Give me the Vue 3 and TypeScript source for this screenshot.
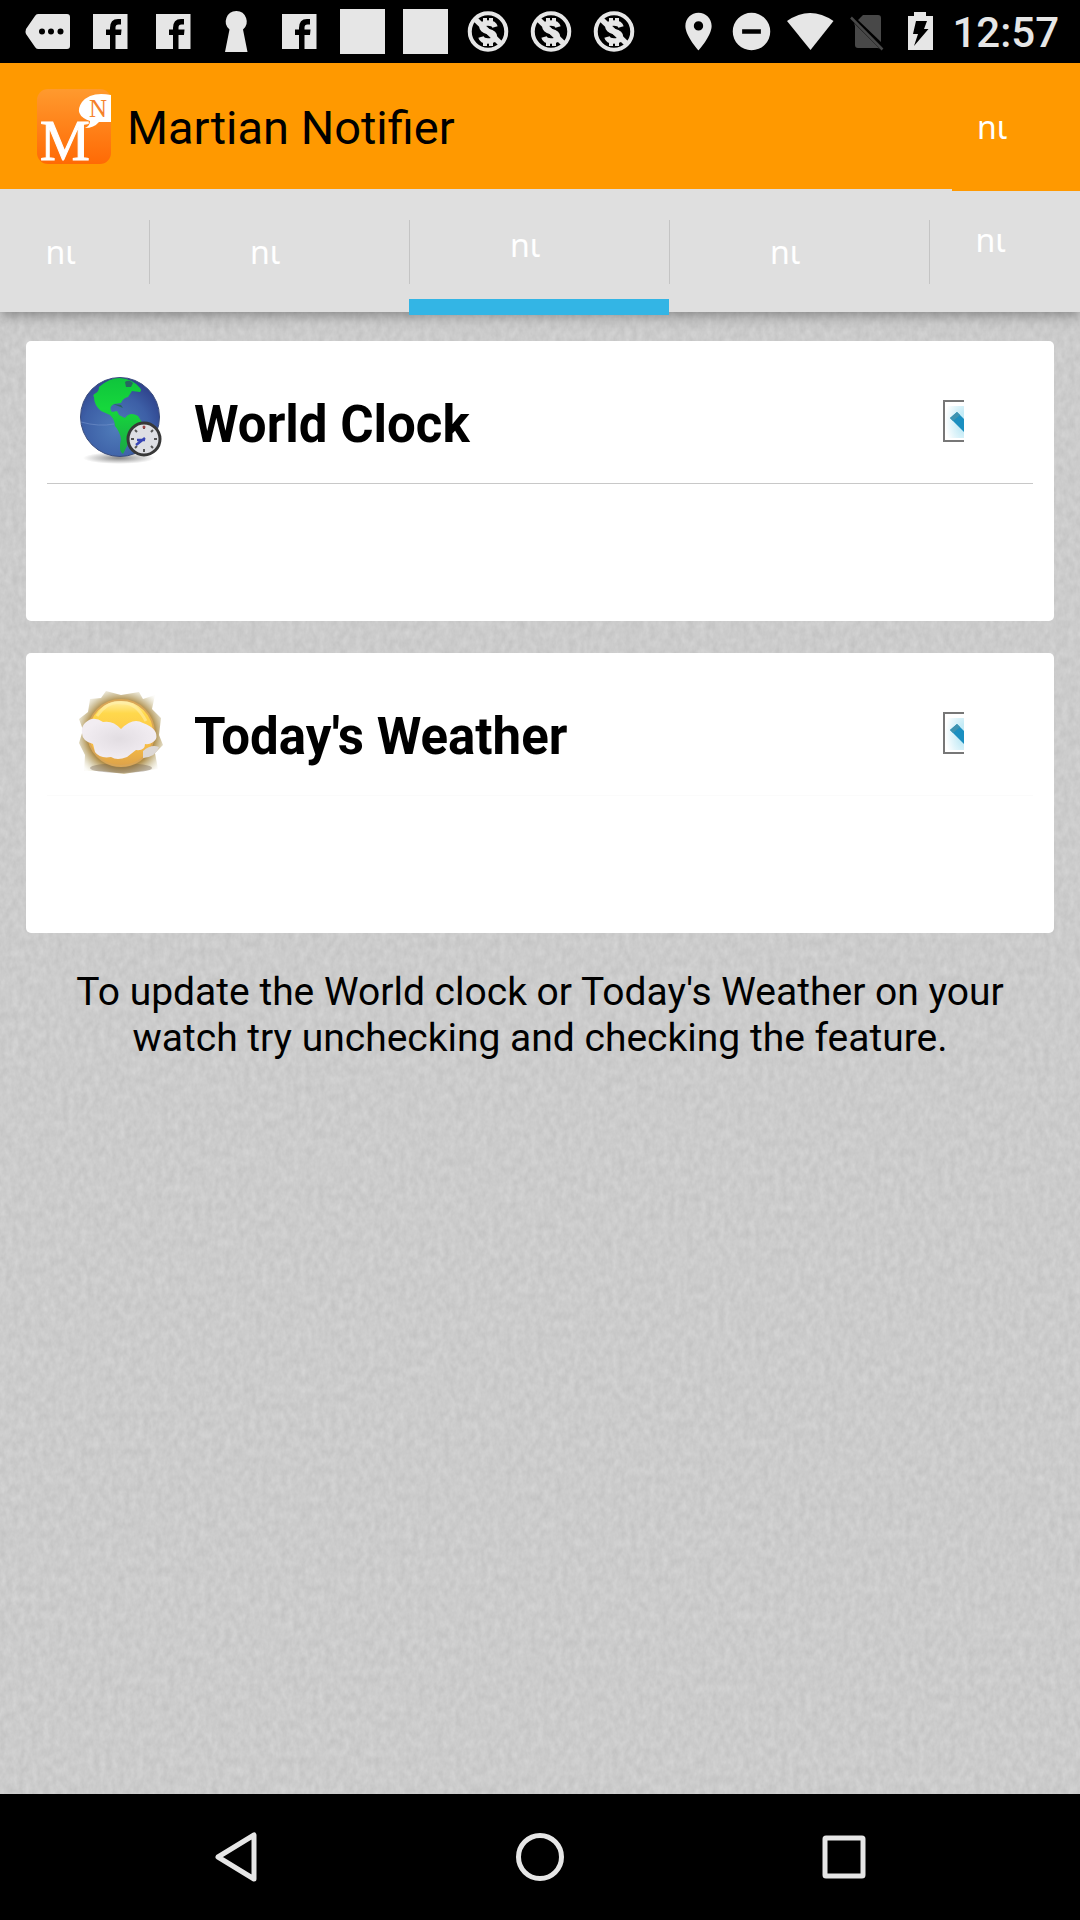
<script setup lang="ts">
import { ref } from 'vue'

type NoteIcon = 'more' | 'facebook' | 'keyhole' | 'blank' | 'nocash'

interface Tab {
  id: string
  size: string
}

const notes: NoteIcon[] = [
  'more', 'facebook', 'facebook', 'keyhole', 'facebook',
  'blank', 'blank', 'nocash', 'nocash', 'nocash',
]

const tabs: Tab[] = [
  { id: 'first', size: 'leading' },
  { id: 'second', size: 'full' },
  { id: 'third', size: 'full' },
  { id: 'fourth', size: 'full' },
  { id: 'last', size: 'trailing' },
]

const activeTab = ref('third')

const features = ref([
  { id: 'clock', title: 'World Clock', enabled: true },
  { id: 'weather', title: "Today's Weather", enabled: true },
])
</script>

<template>
  <div class="screen">
    <div class="status">
      <div class="notes">
        <svg v-for="(icon, i) in notes" :key="i" class="slot" viewBox="0 0 45 45" aria-hidden="true">
          <template v-if="icon === 'more'">
            <path d="M13 5H42Q45 5 45 8V37Q45 40 42 40H13Q11 40 10 38L1 25Q0 23 1 20L10 7Q11 5 13 5Z" fill="#e6e6e6" />
            <circle cx="17" cy="22.500" r="3" /><circle cx="26" cy="22.500" r="3" /><circle cx="35.500" cy="22.500" r="3" />
          </template>
          <template v-else-if="icon === 'facebook'">
            <path d="M5 5H39.500V40H5Z" fill="#e6e6e6" />
            <path d="M22 40V26H18V20.500H22V19Q22 10 30 10H33V15.500H30.500Q27.500 15.500 27.500 18.500V20.500H33.500L33 26H27.500V40Z" />
          </template>
          <path v-else-if="icon === 'keyhole'" d="M22.500 2A10.500 10.500 0 0 1 29 20.500L33.500 43H11L15.500 20.500A10.500 10.500 0 0 1 22.500 2Z" fill="#e6e6e6" />
          <path v-else-if="icon === 'blank'" d="M0 0H45V45H0Z" fill="#e6e6e6" />
          <g v-else fill="none" stroke="#e6e6e6">
            <circle cx="22" cy="22.500" r="18.250" stroke-width="4" />
            <path d="M9 10L35 35" stroke-width="5.500" />
            <path d="M19 9V14M25 9V14M19 31V37M25 31V37" stroke-width="4" />
            <path d="M29 18Q28 14 22 14Q16 14 16 18Q16 21 22 22.500Q28.500 24 28.500 28Q28.500 32 22 32Q16 32 15 28" stroke-width="5.500" />
          </g>
        </svg>
      </div>
      <div class="system">
        <svg class="slot" viewBox="0 0 24 24" aria-hidden="true">
          <path d="M12 2C8.130 2 5 5.130 5 9c0 5.250 7 13 7 13s7-7.750 7-13c0-3.870-3.130-7-7-7zm0 9.500a2.500 2.500 0 1 1 0-5 2.500 2.500 0 0 1 0 5z" fill="#e6e6e6" />
        </svg>
        <svg class="slot" viewBox="0 0 24 24" aria-hidden="true">
          <path d="M12 2a10 10 0 1 0 0 20 10 10 0 0 0 0-20zm5 11.200H7v-2.400h10z" fill="#e6e6e6" />
        </svg>
        <svg class="wifi" viewBox="0 0 56 45" aria-hidden="true">
          <path d="M5 12Q28 -4 51.500 12L28.500 41Z" fill="#e6e6e6" />
        </svg>
        <svg class="sim" viewBox="0 0 42 45" aria-hidden="true">
          <path d="M17 6H32Q35 6 35 9V33L12 11ZM8 14L34 40Q33 39 31 39H12Q9 39 9 36V17Z" fill="#484848" />
          <path d="M5 8.500L36.500 40.500" stroke="#484848" stroke-width="2.500" />
        </svg>
        <svg class="battery" viewBox="0 0 48 45" aria-hidden="true">
          <path d="M18 3H30V7H37V41H12V7H18Z" fill="#e6e6e6" />
          <path d="M20 12H31L28 20H32.500L18 37L22 25H17Z" />
        </svg>
        <time class="clock">12:57</time>
      </div>
    </div>

    <header class="bar">
      <svg class="logo" viewBox="0 0 74 75" role="img" aria-label="Martian">
        <defs>
          <linearGradient id="logo-fill" x1="0" y1="0" x2="0" y2="1">
            <stop offset="0" stop-color="#ff9a2e" />
            <stop offset="1" stop-color="#ff6a05" />
          </linearGradient>
        </defs>
        <rect width="74" height="75" rx="11" fill="url(#logo-fill)" />
        <path d="M74 6Q54 2 45 13Q36 26 53 32Q53 37 48 39Q57 39 62 33H74Z" fill="#fff" />
        <text x="52" y="28" font-size="25" fill="#f5812a">N</text>
        <text x="3" y="71" font-size="56" fill="#fff" stroke="#fff">M</text>
      </svg>
      <h1 class="app-name">Martian Notifier</h1>
      <button class="action" type="button"><span class="label">nι</span></button>
    </header>

    <nav class="tabs">
      <button
        v-for="tab in tabs"
        :key="tab.id"
        type="button"
        class="tab"
        :class="[tab.size, { selected: tab.id === activeTab }]"
        @click="activeTab = tab.id"
      >
        <span class="label">nι</span>
      </button>
    </nav>

    <main class="content">
      <svg class="texture" aria-hidden="true">
        <filter id="paper" x="0" y="0" width="100%" height="100%" color-interpolation-filters="sRGB">
          <feTurbulence type="fractalNoise" baseFrequency="0.16 0.11" numOctaves="3" seed="4" />
          <feColorMatrix values="0.09 0 0 0 0.753  0.09 0 0 0 0.753  0.09 0 0 0 0.753  0 0 0 0 1" />
        </filter>
        <rect width="100%" height="100%" filter="url(#paper)" />
      </svg>

      <section v-for="item in features" :key="item.id" class="card">
        <div class="card-head" :class="{ faint: item.id === 'weather' }">
          <svg v-if="item.id === 'clock'" class="picture" viewBox="0 0 84 92" aria-hidden="true">
            <defs>
              <radialGradient id="sea" cx="0.450" cy="0.650" r="0.700">
                <stop offset="0" stop-color="#4f7cba" />
                <stop offset="0.600" stop-color="#3d5fa6" />
                <stop offset="1" stop-color="#2b3c86" />
              </radialGradient>
              <radialGradient id="ground">
                <stop offset="0" stop-color="#555" stop-opacity="0.700" />
                <stop offset="1" stop-color="#555" stop-opacity="0" />
              </radialGradient>
              <linearGradient id="land" x1="0" y1="0" x2="0" y2="1">
                <stop offset="0" stop-color="#0fc43c" />
                <stop offset="0.400" stop-color="#16d83c" />
                <stop offset="1" stop-color="#1aa845" />
              </linearGradient>
            </defs>
            <ellipse cx="40" cy="83" rx="36" ry="6" fill="url(#ground)" />
            <circle cx="41" cy="42" r="39.500" fill="url(#sea)" stroke="#3b4d7d" />
            <path d="M20 12Q30 3 41 3Q54 4 61 13Q63 15 61 17L53 16L49 22Q44 23 42 28L35 29Q29 32 33 37L38 36L40 40L46 43Q51 36 59 41L64 49Q60 58 51 65L44 79Q39 76 42 64Q41 57 36 51Q36 45 31 40L22 36Q15 30 15 22Q13 20 17 18Q20 16 20 12Z" fill="url(#land)" />
            <path d="M46 7Q50 4 54 8L52 12H47ZM34 29L42 30L44 33" fill="#286660" />
            <path d="M2 47Q20 52 35 49" fill="none" stroke="#7593cb" opacity="0.600" />
            <circle cx="65" cy="64" r="16" fill="#dedfe4" stroke="#383838" stroke-width="3" />
            <path d="M65 51V54M65 74V77M52 64H55M75 64H78M56 55L58 57M74 55L72 57M56 73L58 71M74 73L72 71" stroke="#555" stroke-width="2" />
            <path d="M57 70L66 63M58 65H66" stroke="#3845b5" stroke-width="2.500" />
            <circle cx="65" cy="52" r="1.500" fill="#a34545" />
          </svg>
          <svg v-else class="picture" viewBox="0 0 84 92" aria-hidden="true">
            <defs>
              <radialGradient id="glow" gradientUnits="userSpaceOnUse" cx="42" cy="47" r="50">
                <stop offset="0.680" stop-color="#b08f4c" />
                <stop offset="0.820" stop-color="#cdbf97" stop-opacity="0.800" />
                <stop offset="1" stop-color="#e4dfc4" stop-opacity="0.100" />
              </radialGradient>
              <linearGradient id="sun" x1="0" y1="0" x2="0" y2="1">
                <stop offset="0" stop-color="#fff1b0" />
                <stop offset="0.200" stop-color="#ffd84c" />
                <stop offset="0.600" stop-color="#fdc343" />
                <stop offset="1" stop-color="#dda24a" />
              </linearGradient>
              <radialGradient id="cloud">
                <stop offset="0" stop-color="#e2dde2" />
                <stop offset="1" stop-color="#f2edf2" />
              </radialGradient>
            </defs>
            <path d="M11 12L22 11L27 4L42 8L60 5L64 12L76 8L73 22L82 31L80 48L84 58L76 66L79 82L62 84L45 87L23 84L5 84L6 68L0 56L4 43L0 32L9 25Z" fill="url(#glow)" />
            <ellipse cx="42" cy="81" rx="31" ry="5" fill="#75634f" opacity="0.400" />
            <circle cx="42" cy="46" r="33" fill="url(#sun)" stroke="#d9a657" stroke-width="2" />
            <path d="M18 29Q29 13 43 16Q57 15 67 34" fill="none" stroke="#fff0ae" stroke-width="3" opacity="0.550" />
            <path d="M6 36Q14 28 24 35Q34 33 42 42Q54 30 64 36Q80 42 77 52Q73 58 66 57Q66 64 57 63L48 70Q38 74 32 70Q21 72 16 65L14 57Q3 54 3 46Q2 40 6 36Z" fill="url(#cloud)" />
            <path d="M64 64Q72 57 80 60Q77 70 64 71Z" fill="#ddd8d5" />
          </svg>
          <label class="card-title" :for="item.id">{{ item.title }}</label>
          <span class="check">
            <input :id="item.id" v-model="item.enabled" type="checkbox">
            <svg v-if="item.enabled" class="tick" viewBox="0 0 21 42" aria-hidden="true">
              <defs>
                <radialGradient :id="item.id + '-halo'" cx="1" cy="0.500" r="1">
                  <stop offset="0.300" stop-color="#c5ebf6" />
                  <stop offset="1" stop-color="#c5ebf6" stop-opacity="0" />
                </radialGradient>
              </defs>
              <path d="M2 6H21V38H2Z" :fill="`url(#${item.id}-halo)`" />
              <path d="M7 18L14 12L21 19V32Z" fill="#1b8fc0" />
              <path d="M7 18L14 12L17 15L10 21Z" fill="#3f93b0" />
            </svg>
          </span>
        </div>
      </section>

      <p class="hint">To update the World clock or Today's Weather on your watch try unchecking and checking the feature.</p>
    </main>

    <footer class="keys">
      <button type="button" aria-label="Back">
        <svg viewBox="0 0 50 50"><path d="M43 3V47L7 25Z" fill="none" stroke="#e6e6e6" stroke-width="5" stroke-linejoin="round" /></svg>
      </button>
      <button type="button" aria-label="Home">
        <svg viewBox="0 0 50 50"><circle cx="25" cy="25" r="21.500" fill="none" stroke="#e6e6e6" stroke-width="5" /></svg>
      </button>
      <button type="button" aria-label="Recent apps">
        <svg viewBox="0 0 50 50"><rect x="6" y="6" width="38" height="38" rx="1" fill="none" stroke="#e6e6e6" stroke-width="5" stroke-linejoin="round" /></svg>
      </button>
    </footer>
  </div>
</template>

<style>
body {
  margin: 0;
  background: #000;
}
</style>

<style scoped>
.screen {
  display: flex;
  flex-direction: column;
  min-height: 100vh;
  font-family: Roboto, "Liberation Sans", sans-serif;
  color: #000;
}

button {
  margin: 0;
  padding: 0;
  border: 0;
  background: none;
}

svg {
  display: block;
}

.status {
  display: flex;
  align-items: center;
  justify-content: space-between;
  height: 63px;
  padding: 0 21px 0 25px;
  background: #000;
}

.notes {
  display: flex;
  gap: 18px;
}

.system {
  display: flex;
  align-items: center;
  gap: 8px;
}

.slot {
  width: 45px;
  height: 45px;
}

.wifi {
  width: 56px;
  height: 45px;
}

.sim {
  width: 42px;
  height: 45px;
}

.battery {
  width: 48px;
  height: 45px;
}

.clock {
  padding-top: 2px;
  font-size: 42px;
  line-height: 48px;
  font-weight: 500;
  color: #e6e6e6;
}

.bar {
  display: flex;
  align-items: center;
  height: 126px;
  padding-left: 37px;
  background: #ff9900;
}

.logo {
  width: 74px;
  height: 75px;
  overflow: visible;
  font-family: "Liberation Serif", serif;
}

.app-name {
  flex: 1;
  margin: 0 0 0 16px;
  padding-top: 3px;
  font-size: 47px;
  line-height: 56px;
  font-weight: 400;
}

.action {
  position: relative;
  z-index: 1;
  align-self: flex-start;
  width: 128px;
  height: 128px;
  padding-right: 20px;
  background: #ff9900;
}

.label {
  display: block;
  width: 58px;
  margin: 0 auto;
  font-family: "Noto Sans", sans-serif;
  font-size: 32px;
  line-height: 40px;
  text-align: left;
  color: #fff;
}

.tabs {
  position: relative;
  z-index: 0;
  display: flex;
  height: 123px;
  background: #dfdfdf;
  box-shadow: 0 2px 14px rgba(0, 0, 0, 0.4);
  clip-path: inset(0 0 -20px);
}

.tab {
  position: relative;
  flex: 260 1 0;
  padding-top: 2px;
}

.tab.leading {
  flex-grow: 149;
}

.tab.trailing {
  flex-grow: 151;
  padding: 0 0 22px;
}

.tab + .tab::before {
  content: "";
  position: absolute;
  top: 31px;
  left: 0;
  width: 1px;
  height: 64px;
  background: #c4c4c4;
}

.tab.selected {
  height: 126px;
  border-bottom: 16px solid #33b5e5;
}

.content {
  position: relative;
  z-index: -1;
  flex: 1;
  display: flex;
  flex-direction: column;
  gap: 32px;
  padding: 29px 26px;
  background: #cbcbcb;
}

.texture {
  position: absolute;
  z-index: -1;
  inset: 0;
  width: 100%;
  height: 100%;
}

.card {
  height: 280px;
  border-radius: 5px;
  background: #fff;
}

.card-head {
  display: flex;
  align-items: center;
  box-sizing: border-box;
  height: 143px;
  margin: 0 21px;
  padding: 18px 69px 0 32px;
  border-bottom: 1px solid #c8c8c8;
}

.card-head.faint {
  border-color: #fbfbfb;
}

.picture {
  width: 84px;
  height: 92px;
}

.card-title {
  flex: 1;
  padding: 24px 0 16px 31px;
  font-size: 51px;
  line-height: 60px;
  font-weight: 700;
}

.check {
  position: relative;
  width: 21px;
  height: 42px;
}

.check input {
  display: block;
  box-sizing: border-box;
  width: 21px;
  height: 42px;
  margin: 0;
  appearance: none;
  border: 2px solid #777;
  border-right: 0;
  background: #fff;
}

.tick {
  position: absolute;
  inset: 0;
  pointer-events: none;
}

.hint {
  margin: 4px 40px 0;
  font-size: 39px;
  line-height: 46px;
  text-align: center;
}

.keys {
  display: flex;
  justify-content: center;
  gap: 254px;
  height: 126px;
  background: #000;
}

.keys svg {
  width: 50px;
  height: 50px;
}
</style>
